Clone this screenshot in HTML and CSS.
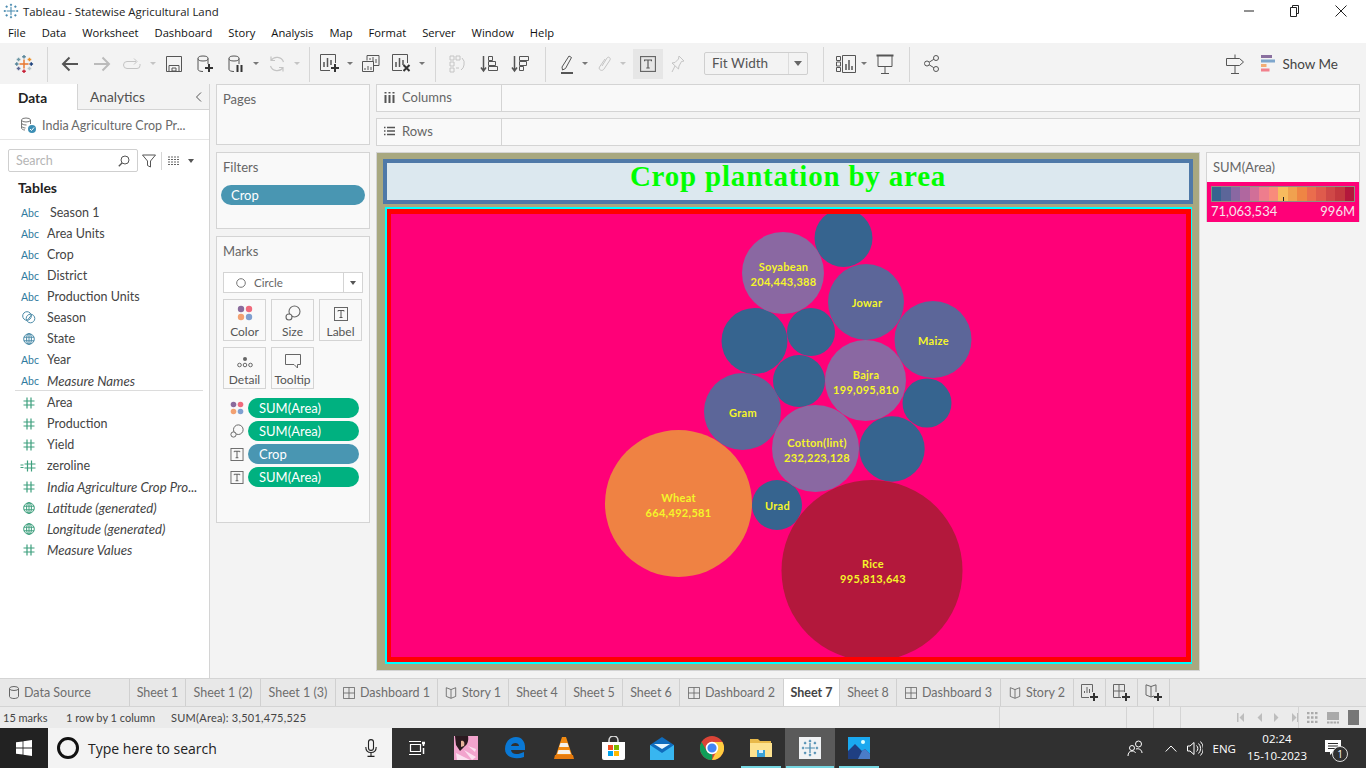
FILE: index.html
```html
<!DOCTYPE html>
<html lang="en">
<head>
    <meta charset="UTF-8">
    <meta name="viewport" content="width=device-width, initial-scale=1.0">
    <title>Tableau - Statewise Agricultural Land</title>
    <link rel="stylesheet" href="styles.css">
</head>
<body>

<svg class="defs" width="0" height="0">
    <symbol id="i-logo" viewBox="0 0 22 22">
        <g fill="none" stroke-width="1.6">
            <path d="M11 6v10M6 11h10" stroke="#e8762d"/>
            <path d="M11 1v4M9 3h4" stroke="#5b879b"/>
            <path d="M11 17v4M9 19h4" stroke="#c72037"/>
            <path d="M1 11h4M3 9v4" stroke="#59879b"/>
            <path d="M17 11h4M19 9v4" stroke="#1f447e"/>
            <path d="M5 4v4M3 6h4" stroke="#7099a6"/>
            <path d="M17 4v4M15 6h4" stroke="#eb912b"/>
            <path d="M5 14v4M3 16h4" stroke="#5c6692"/>
            <path d="M17 14v4M15 16h4" stroke="#b4c3c9"/>
        </g>
    </symbol>
    <symbol id="i-tab-logo" viewBox="0 0 22 22">
        <g fill="none" stroke="#4a8bb0" stroke-width="1.5">
            <path d="M11 5v12M5 11h12"/>
            <path d="M11 1v3M9.5 2.500h3M11 18v3M9.500 19.500h3M1 11h3M2.500 9.500v3M18 11h3M19.500 9.500v3"/>
            <path d="M5 3.500v3M3.500 5h3M17 3.500v3M15.500 5h3M5 15.500v3M3.500 17h3M17 15.500v3M15.500 17h3"/>
        </g>
    </symbol>
    <symbol id="i-hash" viewBox="0 0 12 12">
        <path d="M4 .5v11M8 .5v11M.5 4h11M.5 8h11" fill="none" stroke="currentColor" stroke-width="1.200"/>
    </symbol>
    <symbol id="i-globe" viewBox="0 0 12 12">
        <g fill="none" stroke="currentColor">
            <circle cx="6" cy="6" r="5.300"/>
            <ellipse cx="6" cy="6" rx="2.400" ry="5.300"/>
            <path d="M6 .7v10.600M.9 4.200h10.200M.9 7.800h10.200"/>
        </g>
    </symbol>
    <symbol id="i-dots" viewBox="0 0 16 16">
        <circle cx="4" cy="4" r="3.200" fill="#8a6b9c"/>
        <circle cx="12" cy="4" r="3.200" fill="#ef6a7c"/>
        <circle cx="4" cy="12" r="3.200" fill="#f2a172"/>
        <circle cx="12" cy="12" r="3.200" fill="#7f9fd0"/>
    </symbol>
    <symbol id="i-size" viewBox="0 0 16 16">
        <g fill="none" stroke="#666" stroke-width="1.100">
            <circle cx="9.500" cy="6.500" r="5.500"/>
            <circle cx="4" cy="12" r="3" fill="#f8f8f8"/>
        </g>
    </symbol>
    <symbol id="i-label" viewBox="0 0 14 14">
        <rect x=".5" y=".5" width="13" height="13" fill="none" stroke="#666"/>
        <path d="M4 4.500v-1h6v1M7 3.500v7M5.500 10.500h3" fill="none" stroke="#555"/>
    </symbol>
    <symbol id="i-tab-sheet" viewBox="0 0 14 14">
        <path d="M.5.500h13v13H.5zM7 .5v13M.5 7h13" fill="none" stroke="#666"/>
    </symbol>
    <symbol id="i-tab-story" viewBox="0 0 14 14">
        <path d="M7 3 1.500.8v10.200L7 13.200l5.500-2.200V.8zM7 3v10" fill="none" stroke="#666"/>
    </symbol>
    <symbol id="i-plus" viewBox="0 0 8 8">
        <path d="M4 0v8M0 4h8" stroke="#333" stroke-width="2"/>
    </symbol>
</svg>

<div class="titlebar">
    <svg class="title-logo" width="16" height="16"><use href="#i-tab-logo"/></svg>
    <span class="title-text">Tableau - Statewise Agricultural Land</span>
    <div class="win-btns">
        <span class="win-btn"><svg width="10" height="10" viewBox="0 0 10 10"><path d="M0 5h10" stroke="#222"/></svg></span>
        <span class="win-btn"><svg width="12" height="12" viewBox="0 0 12 12"><path d="M3.500 2.500v-2h6v8h-2M1.500 2.500h6v9h-6z" fill="none" stroke="#222"/></svg></span>
        <span class="win-btn"><svg width="12" height="12" viewBox="0 0 12 12"><path d="M.5.500l11 11M11.500.5l-11 11" stroke="#222"/></svg></span>
    </div>
</div>

<div class="menubar">
    <span>File</span><span>Data</span><span>Worksheet</span><span>Dashboard</span><span>Story</span><span>Analysis</span><span>Map</span><span>Format</span><span>Server</span><span>Window</span><span>Help</span>
</div>

<div class="toolbar">
    <div class="tb-group g1">
        <span class="tool"><svg width="20" height="20"><use href="#i-logo"/></svg></span>
    </div>
    <div class="tb-group g2">
        <span class="tool back"><svg width="18" height="16" viewBox="0 0 18 16"><path d="M17 8H2M8.500 1.500 2 8l6.500 6.500" fill="none" stroke="#555" stroke-width="2"/></svg></span>
        <span class="tool"><svg width="18" height="16" viewBox="0 0 18 16"><path d="M1 8h15M9.500 1.500 16 8l-6.500 6.500" fill="none" stroke="#bbb" stroke-width="2"/></svg></span>
        <span class="tool"><svg width="20" height="12" viewBox="0 0 20 12"><path d="M13 3.500H4a3 3 0 0 0 0 7h10a3 3 0 0 0 3-3V6M11 .5l3 3-3 3" fill="none" stroke="#c4c4c4"/></svg></span>
        <span class="caret off"></span>
        <span class="tool"><svg width="16" height="16" viewBox="0 0 16 16"><path d="M.5.500h15v15H.5zM3 15V9.500h10V15M6 12h4v3H6z" fill="none" stroke="#555"/></svg></span>
        <span class="tool"><svg width="16" height="18" viewBox="0 0 16 18"><path d="M1 3.500v11c0 1 2 2 5 2M11 9V3.500" fill="none" stroke="#555"/><ellipse cx="6" cy="3.500" rx="5" ry="2.500" fill="none" stroke="#555"/><path d="M12 9v8M8 13h8" stroke="#333" stroke-width="2"/></svg></span>
        <span class="tool"><svg width="16" height="18" viewBox="0 0 16 18"><path d="M1 3.500v11c0 1 2 2 5 2M11 9V3.500" fill="none" stroke="#555"/><ellipse cx="6" cy="3.500" rx="5" ry="2.500" fill="none" stroke="#555"/><path d="M9.500 10v7M13.500 10v7" stroke="#333" stroke-width="2"/></svg></span>
        <span class="caret"></span>
        <span class="tool"><svg width="18" height="18" viewBox="0 0 18 18"><path d="M15.500 7A7 7 0 0 0 3 5.500M2.500 11A7 7 0 0 0 15 12.500M3 1.500v4h4M15 16.500v-4h-4" fill="none" stroke="#c4c4c4" stroke-width="1.200"/></svg></span>
        <span class="caret off"></span>
    </div>
    <div class="tb-group g3">
        <span class="tool"><svg width="20" height="19" viewBox="0 0 20 19"><path d="M10 16.500H.5V.5h15V9" fill="none" stroke="#555"/><path d="M4 8v5M7.500 4v9M11 6v5" stroke="#555" stroke-width="1.500"/><path d="M15 10v8M11 14h8" stroke="#333" stroke-width="2"/></svg></span>
        <span class="caret"></span>
        <span class="tool"><svg width="18" height="17" viewBox="0 0 18 17"><path d="M5 5.500V.5h12v10h-5M.5 6.500h11v10H.5z" fill="none" stroke="#555"/><path d="M8 5V3M11 7V2M14 8V4M3 13v2M6 11v4M9 12v3" stroke="#555"/></svg></span>
        <span class="tool"><svg width="20" height="19" viewBox="0 0 20 19"><path d="M10 16.500H.5V.5h15V9" fill="none" stroke="#555"/><path d="M4 8v5M7.500 4v9M11 6v5" stroke="#555" stroke-width="1.500"/><path d="M11.500 11l6 6M17.500 11l-6 6" stroke="#333" stroke-width="2"/></svg></span>
        <span class="caret"></span>
    </div>
    <div class="tb-group g4">
        <span class="tool"><svg width="18" height="18" viewBox="0 0 18 18"><path d="M1 1h4v4H1zM7 1h4v4H7zM1 7h4v4H1zM1 13h4v4H1zM7 13h3M13 3a7 7 0 0 1 2 7M15 10a7 7 0 0 1-3 5" fill="none" stroke="#c4c4c4"/></svg></span>
        <span class="tool"><svg width="18" height="18" viewBox="0 0 18 18"><path d="M3.500 1v15M1 12.500l2.500 3.500L6 12.500" fill="none" stroke="#555" stroke-width="1.500"/><path d="M8.500 1.500h4v4h-4zM8.500 6.500h7v4h-7zM8.500 11.500h9v4h-9z" fill="none" stroke="#555"/></svg></span>
        <span class="tool"><svg width="18" height="18" viewBox="0 0 18 18"><path d="M3.500 1v15M1 12.500l2.500 3.500L6 12.500" fill="none" stroke="#555" stroke-width="1.500"/><path d="M8.500 1.500h9v4h-9zM8.500 6.500h7v4h-7zM8.500 11.500h4v4h-4z" fill="none" stroke="#555"/></svg></span>
    </div>
    <div class="tb-group g5">
        <span class="tool tool-sm"><svg width="14" height="20" viewBox="0 0 14 20"><path d="M2 13 9 2l2.500 1.500-6 11L2.500 16z" fill="none" stroke="#555"/><path d="M1 19h12" stroke="#555" stroke-width="2"/></svg></span>
        <span class="caret"></span>
        <span class="tool tool-sm clip"><svg width="14" height="18" viewBox="0 0 14 18"><path d="M4 11 9 3c1.500-2 4 0 3 2l-6 9c-2 3-6 .5-4.500-2L7 4" fill="none" stroke="#c4c4c4"/></svg></span>
        <span class="caret off"></span>
        <span class="tool tool-t"><svg width="16" height="16"><use href="#i-label"/></svg></span>
        <span class="tool tool-pin"><svg width="14" height="18" viewBox="0 0 14 18"><path d="M8 1l5 5-2.500.5L8 11l-.5 3L1 8l3-.5L7.500 4zM4 11l-3 6" fill="none" stroke="#c4c4c4"/></svg></span>
        <div class="fit-select"><span class="fit-text">Fit Width</span><span class="fit-arrow"><span class="caret-shape"></span></span></div>
    </div>
    <div class="tb-group g6">
        <span class="tool tool-sm"><svg width="20" height="18" viewBox="0 0 20 18"><path d="M.5 1.500h4v4h-4zM.5 7h4v4h-4zM.5 12.500h4v4h-4zM6.500.5h13v17h-13z" fill="none" stroke="#555"/><path d="M10 9v6M13 5v10M16 11v4" stroke="#555" stroke-width="1.500"/></svg></span>
        <span class="caret"></span>
        <span class="tool"><svg width="18" height="20" viewBox="0 0 18 20"><path d="M.5 1.500h17" stroke="#555" stroke-width="2"/><path d="M2 2v10.500h14V2M9 12.500v6.500M5 19.500h8" fill="none" stroke="#555"/></svg></span>
    </div>
    <div class="tb-group g7">
        <span class="tool"><svg width="15" height="17" viewBox="0 0 15 17"><g fill="none" stroke="#555"><circle cx="3" cy="8.500" r="2.500"/><circle cx="12" cy="3" r="2.500"/><circle cx="12" cy="14" r="2.500"/><path d="M5.200 7.200 9.800 4.300M5.200 9.800l4.600 2.900"/></g></svg></span>
    </div>
    <div class="tb-right">
        <span class="tool"><svg width="18" height="20" viewBox="0 0 18 20"><path d="M.5 4.500h13l4 3.500-4 3.500H.5zM9 .5v4M9 11.500V19M5 19.500h8" fill="none" stroke="#555"/></svg></span>
        <svg class="showme-icon" width="15" height="17" viewBox="0 0 15 17">
            <rect width="11" height="3" fill="#8a6f9f"/>
            <rect y="4.500" width="14" height="3" fill="#7ea6cc"/>
            <rect y="9" width="5.500" height="3" fill="#f3ad74"/>
            <rect y="13.500" width="8.500" height="3" fill="#f2808c"/>
        </svg>
        <span class="showme-text">Show Me</span>
    </div>
</div>

<div class="main">
    <div class="data-pane">
        <div class="pane-tabs">
            <span class="pane-tab active">Data</span>
            <span class="pane-tab analytics">Analytics<svg width="7" height="10" viewBox="0 0 7 10"><path d="M6 .5 1.500 5 6 9.500" fill="none" stroke="#555"/></svg></span>
        </div>
        <div class="source-row">
            <svg width="17" height="17" viewBox="0 0 17 17"><g fill="none" stroke="#777"><ellipse cx="6" cy="3" rx="4.500" ry="2"/><path d="M1.500 3v8c0 1 1.500 2 3.500 2M10.500 3v4M1.500 6c0 1.500 3 2 5 2M1.500 9c0 1 2 2 4 2"/></g><circle cx="12" cy="12" r="4" fill="#3d8fb5"/><path d="M10 12l1.500 1.500 2.500-3" fill="none" stroke="#fff"/></svg>
            <span>India Agriculture Crop Pr...</span>
        </div>
        <div class="search-row">
            <div class="search-box"><span>Search</span><svg width="12" height="12" viewBox="0 0 12 12"><circle cx="7" cy="5" r="4" fill="none" stroke="#555"/><path d="M4 8 .8 11.200" stroke="#555" stroke-width="1.300"/></svg></div>
            <svg class="filter-icon" width="14" height="14" viewBox="0 0 14 14"><path d="M.5 1h13L8.500 7v6l-3-1.500V7z" fill="none" stroke="#555"/></svg>
            <span class="search-sep"></span>
            <svg class="list-icon" width="12" height="10" viewBox="0 0 12 10"><path d="M0 1h12M0 3.500h12M0 6h12M0 8.500h12" stroke="#666" stroke-dasharray="2 1"/></svg>
            <span class="caret-shape dark"></span>
        </div>
        <h3 class="tables-head">Tables</h3>
        <ul class="fields">
            <li><span class="abc">Abc</span><span class="shift">Season 1</span></li>
            <li><span class="abc">Abc</span><span>Area Units</span></li>
            <li><span class="abc">Abc</span><span>Crop</span></li>
            <li><span class="abc">Abc</span><span>District</span></li>
            <li><span class="abc">Abc</span><span>Production Units</span></li>
            <li><svg class="ficon blue" width="14" height="13" viewBox="0 0 14 13"><g fill="none" stroke="currentColor"><circle cx="5" cy="5" r="4.300"/><circle cx="8.500" cy="7.500" r="4.300"/><path d="M5.500 9l4-5"/></g></svg><span>Season</span></li>
            <li><svg class="ficon blue" width="12" height="12"><use href="#i-globe"/></svg><span>State</span></li>
            <li><span class="abc">Abc</span><span>Year</span></li>
            <li><span class="abc">Abc</span><span class="calc">Measure Names</span></li>
            <li class="rule"></li>
            <li><svg class="ficon green" width="12" height="12"><use href="#i-hash"/></svg><span>Area</span></li>
            <li><svg class="ficon green" width="12" height="12"><use href="#i-hash"/></svg><span>Production</span></li>
            <li><svg class="ficon green" width="12" height="12"><use href="#i-hash"/></svg><span>Yield</span></li>
            <li><svg class="ficon green wide" width="16" height="12" viewBox="0 0 16 12"><path d="M.5 5h3M.5 7.500h3" stroke="currentColor"/><path d="M7.500.5v11M11.500.5v11M4.500 4h11M4.500 8h11" fill="none" stroke="currentColor" stroke-width="1.200"/></svg><span>zeroline</span></li>
            <li><svg class="ficon green" width="12" height="12"><use href="#i-hash"/></svg><span class="calc">India Agriculture Crop Pro...</span></li>
            <li><svg class="ficon green" width="12" height="12"><use href="#i-globe"/></svg><span class="calc">Latitude (generated)</span></li>
            <li><svg class="ficon green" width="12" height="12"><use href="#i-globe"/></svg><span class="calc">Longitude (generated)</span></li>
            <li><svg class="ficon green" width="12" height="12"><use href="#i-hash"/></svg><span class="calc">Measure Values</span></li>
        </ul>
    </div>

    <div class="side">
        <div class="card pages"><div class="card-title">Pages</div></div>
        <div class="card filters">
            <div class="card-title">Filters</div>
            <div class="pill blue-pill filter-pill">Crop</div>
        </div>
        <div class="card marks">
            <div class="card-title">Marks</div>
            <div class="mark-select">
                <span class="mark-type"><svg width="10" height="10" viewBox="0 0 10 10"><circle cx="5" cy="5" r="4.300" fill="none" stroke="#777"/></svg>Circle</span>
                <span class="mark-arrow"><span class="caret-shape"></span></span>
            </div>
            <div class="mark-btns">
                <div class="mark-btn"><svg width="16" height="16"><use href="#i-dots"/></svg><span>Color</span></div>
                <div class="mark-btn"><svg width="16" height="16"><use href="#i-size"/></svg><span>Size</span></div>
                <div class="mark-btn"><svg width="14" height="14"><use href="#i-label"/></svg><span>Label</span></div>
                <div class="mark-btn"><svg width="16" height="14" viewBox="0 0 16 14"><circle cx="8" cy="4" r="2" fill="#666"/><g fill="none" stroke="#666"><circle cx="2.500" cy="10" r="1.800"/><circle cx="8" cy="10" r="1.800"/><circle cx="13.500" cy="10" r="1.800"/></g></svg><span>Detail</span></div>
                <div class="mark-btn"><svg width="16" height="15" viewBox="0 0 16 15"><path d="M.5.500h15v10h-3v3.500l-3.500-3.500H.5z" fill="none" stroke="#666"/></svg><span>Tooltip</span></div>
            </div>
            <div class="encodings">
                <div class="enc"><svg width="14" height="14"><use href="#i-dots"/></svg><div class="pill green-pill">SUM(Area)</div></div>
                <div class="enc"><svg width="14" height="14"><use href="#i-size"/></svg><div class="pill green-pill">SUM(Area)</div></div>
                <div class="enc"><svg width="13" height="13"><use href="#i-label"/></svg><div class="pill blue-pill">Crop</div></div>
                <div class="enc"><svg width="13" height="13"><use href="#i-label"/></svg><div class="pill green-pill">SUM(Area)</div></div>
            </div>
        </div>
    </div>

    <div class="work">
        <div class="shelf">
            <div class="shelf-label"><svg width="11" height="11" viewBox="0 0 11 11"><path d="M1.500 3v8M5.500 3v8M9.500 3v8M1.500 0v1.500M5.500 0v1.500M9.500 0v1.500" stroke="#555" stroke-width="2"/></svg>Columns</div>
        </div>
        <div class="shelf">
            <div class="shelf-label"><svg width="11" height="10" viewBox="0 0 11 10"><path d="M3 1.500h8M3 5h8M3 8.500h8M0 1.500h1.500M0 5h1.500M0 8.500h1.500" stroke="#555" stroke-width="1.500"/></svg>Rows</div>
        </div>
        <div class="view-row">
            <div class="dash">
                <div class="dash-title">Crop plantation by area</div>
                <div class="viz-frame">
                    <svg class="bubbles" width="795" height="443" viewBox="391 214 795 443">
                        <g class="b-low">
                            <circle cx="843.500" cy="238" r="29"/>
                            <circle cx="754.500" cy="341" r="33"/>
                            <circle cx="811" cy="332" r="24"/>
                            <circle cx="799" cy="381" r="26"/>
                            <circle cx="927" cy="403" r="24.500"/>
                            <circle cx="892" cy="449" r="32.700"/>
                            <circle cx="777" cy="505" r="25"/>
                        </g>
                        <g class="b-mid">
                            <circle cx="866" cy="302" r="38"/>
                            <circle cx="933" cy="339.500" r="38.500"/>
                            <circle cx="742.500" cy="411.500" r="38.500"/>
                        </g>
                        <g class="b-high">
                            <circle cx="783" cy="273" r="41"/>
                            <circle cx="865.500" cy="380.500" r="40.500"/>
                            <circle cx="815.500" cy="448.500" r="43.500"/>
                        </g>
                        <circle class="b-wheat" cx="678.500" cy="503.500" r="73.500"/>
                        <circle class="b-rice" cx="872" cy="570.500" r="90.500"/>
                        <g class="b-text">
                            <text x="783.500" y="271">Soyabean</text>
                            <text x="783.500" y="286">204,443,388</text>
                            <text x="867" y="307">Jowar</text>
                            <text x="933.500" y="345">Maize</text>
                            <text x="866" y="379">Bajra</text>
                            <text x="866" y="394">199,095,810</text>
                            <text x="743" y="417">Gram</text>
                            <text x="817" y="447">Cotton(lint)</text>
                            <text x="817" y="462">232,223,128</text>
                            <text x="678.500" y="502">Wheat</text>
                            <text x="678.500" y="517">664,492,581</text>
                            <text x="777.500" y="510">Urad</text>
                            <text x="873" y="568">Rice</text>
                            <text x="873" y="583">995,813,643</text>
                        </g>
                    </svg>
                </div>
            </div>
            <div class="legend">
                <div class="legend-title">SUM(Area)</div>
                <div class="legend-body">
                    <div class="ramp">
                        <i class="c1"></i><i class="c2"></i><i class="c3"></i><i class="c4"></i><i class="c5"></i><i class="c6"></i><i class="c7"></i><i class="c8"></i><i class="c9"></i><i class="c10"></i><i class="c11"></i><i class="c12"></i><i class="c13"></i><i class="c14"></i><i class="c15"></i>
                        <span class="tick"></span>
                    </div>
                    <div class="ramp-labels"><span>71,063,534</span><span>996M</span></div>
                </div>
            </div>
        </div>
    </div>
</div>

<div class="tabs">
    <span class="tab t-source"><svg width="10" height="13" viewBox="0 0 10 13"><path d="M.5 2.500v8c0 1 2 2 4.500 2s4.500-1 4.500-2v-8" fill="none" stroke="#666"/><ellipse cx="5" cy="2.500" rx="4.500" ry="2" fill="none" stroke="#666"/></svg>Data Source</span>
    <span class="tab t-sheet">Sheet 1</span>
    <span class="tab t-sheet2">Sheet 1 (2)</span>
    <span class="tab t-sheet2">Sheet 1 (3)</span>
    <span class="tab t-dash"><svg width="12" height="12"><use href="#i-tab-sheet"/></svg>Dashboard 1</span>
    <span class="tab t-story"><svg width="12" height="12"><use href="#i-tab-story"/></svg>Story 1</span>
    <span class="tab t-sheet3">Sheet 4</span>
    <span class="tab t-sheet3">Sheet 5</span>
    <span class="tab t-sheet3">Sheet 6</span>
    <span class="tab t-dash2"><svg width="12" height="12"><use href="#i-tab-sheet"/></svg>Dashboard 2</span>
    <span class="tab t-active">Sheet 7</span>
    <span class="tab t-sheet3">Sheet 8</span>
    <span class="tab t-dash2"><svg width="12" height="12"><use href="#i-tab-sheet"/></svg>Dashboard 3</span>
    <span class="tab t-story2"><svg width="12" height="12"><use href="#i-tab-story"/></svg>Story 2</span>
    <span class="tab t-new"><svg width="18" height="18" viewBox="0 0 18 18"><path d="M8 13.500H.5V.5h11V8M3.500 9V7M6 9V3M8.500 9V5" fill="none" stroke="#666"/><use href="#i-plus" x="9" y="9" width="8" height="8"/></svg></span>
    <span class="tab t-new"><svg width="18" height="18" viewBox="0 0 18 18"><path d="M8 13.500H.5V.5h11V8M6 .5v13M.5 7h11" fill="none" stroke="#666"/><use href="#i-plus" x="9" y="9" width="8" height="8"/></svg></span>
    <span class="tab t-new"><svg width="18" height="18" viewBox="0 0 18 18"><path d="M6 2.500 1 .8v10.200l5 2 3-1M6 2.500 11 .8V8M6 2.500V13" fill="none" stroke="#666"/><use href="#i-plus" x="9" y="9" width="8" height="8"/></svg></span>
</div>

<div class="status">
    <span class="st-marks">15 marks</span>
    <span class="st-rows">1 row by 1 column</span>
    <span class="st-sum">SUM(Area): 3,501,475,525</span>
    <span class="st-cell st-a"></span>
    <span class="st-cell st-b"></span>
    <span class="st-cell st-c"></span>
    <span class="st-cell st-d">
        <svg width="62" height="9" viewBox="0 0 62 9"><g fill="#bdbdbd"><path d="M0 0h1.500v9H0zM7 0v9L2.500 4.500zM25 0v9l-4.500-4.500zM37 0v9l4.500-4.500zM55 0v9l4.500-4.500zM60 0h1.500v9H60z"/></g></svg>
    </span>
    <span class="st-view">
        <svg width="11" height="11" viewBox="0 0 11 11"><path d="M0 1h11M0 5.500h11M0 10h11" stroke="#aaa" stroke-width="2.500" stroke-dasharray="2.500 1.500"/></svg>
        <svg width="12" height="12" viewBox="0 0 12 12"><rect width="12" height="8" fill="#aaa"/><path d="M0 10.500h12" stroke="#aaa" stroke-width="2" stroke-dasharray="2.500 .8"/></svg>
        <svg width="11" height="15" viewBox="0 0 11 15"><rect width="11" height="15" fill="#777"/></svg>
    </span>
</div>

<div class="taskbar">
    <span class="start"><svg width="16" height="16" viewBox="0 0 16 16"><path d="M0 2.300 6.600 1.400v6.100H0zM7.400 1.300 16 0v7.500H7.400zM0 8.500h6.600v6.100L0 13.700zM7.400 8.500H16V16l-8.600-1.300z" fill="#fff"/></svg></span>
    <div class="task-search">
        <span class="cortana"></span>
        <span class="task-search-text">Type here to search</span>
        <svg class="mic" width="12" height="18" viewBox="0 0 12 18"><g fill="none" stroke="#222" stroke-width="1.100"><rect x="3.500" y=".6" width="5" height="10.800" rx="2.500"/><path d="M.8 8c0 3.500 2 5.500 5.200 5.500s5.200-2 5.200-5.500M6 13.500V17M2.500 17.400h7"/></g></svg>
    </div>
    <span class="task-app a-view"><svg width="16" height="16" viewBox="0 0 16 16"><g fill="none" stroke="#fff" stroke-width="1.200"><path d="M1.500 4.500h10v7h-10z"/><path d="M0 1.500h12M0 14.500h12"/><path d="M14.500 3v3M14.500 8v6" stroke-width="1.500"/><path d="M13 3h3" stroke-width="2.500"/></g></svg></span>
    <span class="task-app"><svg width="24" height="24" viewBox="0 0 24 24"><rect width="24" height="24" fill="#f2a4cd"/><path d="M1 0h13c1 5-1 9-3 10L6 15 2 9z" fill="#2b1a20"/><path d="M7 5c3-1 4 2 3 5L7 11z" fill="#e7b49c"/><path d="M2 17l14 7H3zM10 14l12 7-4 3zM14 10l8 3-1 3z" fill="#fbe0ef"/></svg></span>
    <span class="task-app"><svg width="20" height="22" viewBox="0 0 20 22"><path d="M0 12C0 5 5 0 11 0c6 0 9 5 9 10v3H6c.5 5 7 5 13 2v5c-8 3-19 1-19-8zM6 9h8c0-4-7-4-8 0z" fill="#0a78d4"/></svg></span>
    <span class="task-app"><svg width="20" height="24" viewBox="0 0 20 24"><path d="M8 1h4l6 18H2z" fill="#f28a11"/><path d="M6.500 7h7l1.300 4H5.200zM4.500 14h11l1.300 4H3.200z" fill="#f5f1ea"/><path d="M1 19h18l1 4H0z" fill="#e67a0c"/></svg></span>
    <span class="task-app"><svg width="23" height="24" viewBox="0 0 23 24"><path d="M7 7V4.500a4.500 4.500 0 0 1 9 0V7" fill="none" stroke="#ddd" stroke-width="1.500"/><path d="M0 6h23v16a2 2 0 0 1-2 2H2a2 2 0 0 1-2-2z" fill="#fff"/><rect x="6" y="9" width="5" height="5" fill="#f25022"/><rect x="12" y="9" width="5" height="5" fill="#7fba00"/><rect x="6" y="15" width="5" height="5" fill="#00a4ef"/><rect x="12" y="15" width="5" height="5" fill="#ffb900"/></svg></span>
    <span class="task-app"><svg width="24" height="23" viewBox="0 0 24 23"><path d="M12 0 24 8v15H0V8z" fill="#0f6cbd"/><path d="M0 8l12 8 12-8v15H0z" fill="#38b6f0"/><path d="M4 7h16l-8 5z" fill="#e7f7ff"/></svg></span>
    <span class="task-app"><svg width="24" height="24" viewBox="0 0 24 24"><circle cx="12" cy="12" r="12" fill="#db4437"/><path d="M12 24A12 12 0 0 1 1.600 6L7 15.500l5.500 3z" fill="#0f9d58"/><path d="M12 24a12 12 0 0 0 10.400-18H12l4.500 9z" fill="#ffcd40"/><circle cx="12" cy="12" r="5.400" fill="#4285f4" stroke="#fff" stroke-width="1.600"/></svg></span>
    <span class="task-app"><svg width="22" height="18" viewBox="0 0 22 18"><path d="M0 0h8l2 2h11v16H0z" fill="#e8b94a"/><path d="M0 4h22v14H0z" fill="#fde28f"/><path d="M7 11h8v7H7z" fill="#3aa2d8"/><rect x="9" y="11" width="4" height="3" fill="#d8f1ff"/></svg></span>
    <span class="task-app a-tableau"><svg width="22" height="22" viewBox="0 0 22 22"><rect width="22" height="22" fill="#f0f2f4"/><use href="#i-tab-logo" x="2" y="2" width="18" height="18"/></svg></span>
    <span class="task-app"><svg width="22" height="22" viewBox="0 0 22 22"><rect width="22" height="22" fill="#1aa8ef"/><path d="M0 22v-8l7-7 7 7 3-2 5 5v5z" fill="#1f3f82"/><path d="M14 14l3-2 5 5v5H10z" fill="#4a7cc7"/><circle cx="15" cy="5" r="2" fill="#dff"/></svg></span>
    <span class="underline u-files"></span>
    <span class="underline u-tableau"></span>
    <span class="underline u-photos"></span>
    <div class="tray">
        <svg class="t-people" width="17" height="17" viewBox="0 0 17 17"><g fill="none" stroke="#fff"><circle cx="11.500" cy="4" r="3"/><circle cx="5" cy="8" r="2.500"/><path d="M1 16c0-3 1.500-5 4-5s3 1 3.500 2M9 9c3-1 6 1 6 4"/></g></svg>
        <svg class="t-chev" width="12" height="7" viewBox="0 0 12 7"><path d="M.7 6.500 6 1l5.300 5.500" fill="none" stroke="#fff"/></svg>
        <svg class="t-vol" width="16" height="15" viewBox="0 0 16 15"><path d="M.5 5h2.500L7 1.500v12L3 10H.5zM9.500 4.500a4 4 0 0 1 0 6M11.500 2.500a7 7 0 0 1 0 10M13.500 .5a10 10 0 0 1 0 14" fill="none" stroke="#fff"/></svg>
        <span class="t-lang">ENG</span>
        <span class="t-clock"><span>02:24</span><span>15-10-2023</span></span>
        <span class="t-note">
            <svg width="16" height="16" viewBox="0 0 16 16"><path d="M0 0h16v12H8l-3 3v-3H0z" fill="#fff"/><path d="M3 3.500h10M3 6h10M3 8.500h7" stroke="#2b2b2b"/></svg>
            <span class="t-badge">1</span>
        </span>
    </div>
</div>

</body>
</html>
```

FILE: styles.css
```css
/* General */
html, body {
    margin: 0;
    padding: 0;
}

body {
    width: 1366px;
    height: 768px;
    overflow: hidden;
    display: flex;
    flex-direction: column;
    background: #f3f3f3;
    font-family: 'Lato', sans-serif;
    font-size: 12.5px;
    color: #4f4f4f;
}

svg {
    display: block;
    flex-shrink: 0;
}

.defs {
    position: absolute;
}

/* Window title and menu */
.titlebar {
    height: 22px;
    background: #fff;
    display: flex;
    align-items: center;
    padding-left: 3px;
}

.title-logo {
    margin-right: 4px;
}

.title-text {
    font-family: 'Open Sans', sans-serif;
    font-size: 11.4px;
    color: #222;
}

.win-btns {
    margin-left: auto;
    display: flex;
    padding-right: 2px;
}

.win-btn {
    width: 46px;
    height: 22px;
    display: flex;
    align-items: center;
    justify-content: center;
}

.menubar {
    height: 21px;
    background: #fff;
    display: flex;
    align-items: center;
    font-family: 'Open Sans', sans-serif;
    font-size: 11.2px;
    color: #111;
}

.menubar span {
    padding: 0 8px;
}

/* Toolbar */
.toolbar {
    height: 41px;
    background: #f3f3f3;
    display: flex;
    align-items: flex-start;
    padding-top: 4px;
    box-sizing: border-box;
}

.tb-group {
    height: 35px;
    display: flex;
    align-items: center;
    border-right: 1px solid #d6d6d6;
    padding-bottom: 2px;
    box-sizing: border-box;
}

.g1 { width: 48px; padding-left: 8px; }
.g2 { width: 262px; padding-left: 6px; }
.g3 { width: 126px; padding-left: 4px; }
.g4 { width: 110px; padding-left: 6px; }
.g5 { width: 278px; padding-left: 7px; }
.g6 { width: 86px; padding-left: 8px; }
.g7 { width: 50px; padding-left: 6px; border-right: none; }

.tool {
    width: 31px;
    height: 30px;
    display: flex;
    align-items: center;
    justify-content: center;
}

.back {
    margin-right: 1px;
}

.tool-sm {
    width: 27px;
}

.clip {
    margin-left: 1px;
}

.tool-t {
    width: 30px;
    margin-left: 5px;
    background: #e6e6e6;
}

.tool-pin {
    width: 29px;
}

.caret {
    width: 10px;
    height: 30px;
    display: flex;
    align-items: center;
    justify-content: center;
}

.caret::after,
.caret-shape {
    content: "";
    display: block;
    width: 0;
    height: 0;
    border-left: 3px solid transparent;
    border-right: 3px solid transparent;
    border-top: 3px solid #777;
}

.caret.off::after {
    border-top-color: #c4c4c4;
}

.fit-select {
    width: 104px;
    height: 23px;
    margin-left: 12px;
    display: flex;
    border: 1px solid #cfcfcf;
    border-radius: 2px;
    box-sizing: border-box;
    font-size: 13.5px;
    color: #555;
}

.fit-text {
    flex: 1;
    padding-left: 7px;
    line-height: 21px;
}

.fit-arrow {
    width: 18px;
    border-left: 1px solid #dcdcdc;
    display: flex;
    align-items: center;
    justify-content: center;
}

.fit-arrow .caret-shape {
    border-left-width: 4px;
    border-right-width: 4px;
    border-top-width: 5px;
    border-top-color: #666;
}

.tb-right {
    margin-left: auto;
    height: 35px;
    display: flex;
    align-items: center;
    padding-right: 28px;
    padding-bottom: 2px;
    box-sizing: border-box;
}

.showme-icon {
    margin: 0 6px 0 11px;
}

.showme-text {
    font-size: 13.5px;
    color: #444;
}

/* Main area */
.main {
    height: 594px;
    display: flex;
    background: #f3f3f3;
}

.data-pane {
    width: 210px;
    background: #fff;
    border-right: 1px solid #d4d4d4;
    box-sizing: border-box;
    flex-shrink: 0;
}

.pane-tabs {
    height: 26px;
    display: flex;
}

.pane-tab {
    line-height: 27px;
    font-size: 13.7px;
}

.pane-tab.active {
    width: 77px;
    padding-left: 18px;
    box-sizing: border-box;
    font-weight: 700;
    color: #222;
}

.pane-tab.analytics {
    flex: 1;
    padding-left: 12px;
    display: flex;
    align-items: center;
    justify-content: space-between;
    padding-right: 7px;
    background: #f3f3f3;
    border-left: 1px solid #d4d4d4;
    border-bottom: 1px solid #d4d4d4;
    box-sizing: border-box;
}

.source-row {
    height: 30px;
    display: flex;
    align-items: center;
    gap: 5px;
    padding: 1px 0 0 20px;
    border-bottom: 1px solid #e6e6e6;
    box-sizing: border-box;
    color: #6a6a6a;
}

.search-row {
    display: flex;
    align-items: center;
    padding: 9px 0 0 8px;
}

.search-box {
    width: 130px;
    height: 23px;
    border: 1px solid #cfcfcf;
    border-radius: 2px;
    box-sizing: border-box;
    display: flex;
    align-items: center;
    justify-content: space-between;
    padding: 0 7px;
    color: #b5b5b5;
}

.filter-icon {
    margin-left: 4px;
}

.search-sep {
    width: 1px;
    height: 18px;
    background: #d6d6d6;
    margin: 0 6px 0 5px;
}

.caret-shape.dark {
    margin-left: 8px;
    border-left-width: 3.5px;
    border-right-width: 3.5px;
    border-top-width: 4px;
    border-top-color: #555;
}

.tables-head {
    margin: 7px 0 0 18px;
    font-size: 14px;
    line-height: 18px;
    color: #222;
    font-weight: 700;
}

.fields {
    list-style: none;
    margin: 5px 0 0 0;
    padding: 0;
}

.fields li {
    height: 21px;
    display: flex;
    align-items: center;
    color: #444;
}

.fields li.rule {
    height: 1px;
    margin: -1px 6px 1px 15px;
    background: #dcdcdc;
}

.abc {
    width: 47px;
    padding-left: 21px;
    box-sizing: border-box;
    font-size: 10.5px;
    color: #2f7a9e;
}

.shift {
    margin-left: 3px;
}

.calc {
    font-size: 13.2px;
    font-style: italic;
    white-space: nowrap;
}

.ficon {
    margin-left: 23px;
    margin-right: 12px;
}

.ficon.blue { color: #4b8ba8; margin-left: 22px; margin-right: 11px; }
.ficon.blue[width="12"] { margin-left: 23px; margin-right: 12px; }
.ficon.green { color: #3d9f7d; }
.ficon.wide { margin-left: 20px; margin-right: 11px; }

/* Pages, Filters, Marks */
.side {
    width: 154px;
    margin-left: 6px;
    flex-shrink: 0;
    display: flex;
    flex-direction: column;
    gap: 7px;
}

.card {
    background: #f9f9f9;
    border: 1px solid #d4d4d4;
    box-sizing: border-box;
}

.card-title {
    font-size: 13px;
    color: #666;
    padding: 6px 0 0 6px;
    line-height: 16px;
}

.pages { height: 61px; }
.filters { height: 77px; }
.marks { height: 287px; }

.pill {
    height: 20px;
    border-radius: 10px;
    line-height: 20px;
    font-size: 13px;
    color: #fff;
    padding-left: 10px;
    box-sizing: border-box;
}

.blue-pill { background: #4996b2; }
.green-pill { background: #00b180; }

.filter-pill {
    margin: 10px 4px 0 4px;
}

.mark-select {
    height: 21px;
    margin: 13px 6px 0 6px;
    border: 1px solid #d4d4d4;
    background: #fff;
    display: flex;
    box-sizing: border-box;
    font-size: 11.6px;
    color: #666;
}

.mark-type {
    flex: 1;
    display: flex;
    align-items: center;
    gap: 8px;
    padding-left: 12px;
}

.mark-arrow {
    width: 18px;
    border-left: 1px solid #d4d4d4;
    display: flex;
    align-items: center;
    justify-content: center;
}

.mark-arrow .caret-shape {
    border-left-width: 3.5px;
    border-right-width: 3.5px;
    border-top-width: 4px;
    border-top-color: #555;
}

.mark-btns {
    display: grid;
    grid-template-columns: 43px 43px 43px;
    column-gap: 5px;
    row-gap: 6px;
    margin: 6px 0 0 6px;
}

.mark-btn {
    height: 42px;
    border: 1px solid #d4d4d4;
    box-sizing: border-box;
    display: flex;
    flex-direction: column;
    align-items: center;
    justify-content: flex-end;
    gap: 3px;
    padding-bottom: 1px;
    font-size: 12px;
    color: #555;
}

.encodings {
    margin: 9px 0 0 13px;
    display: flex;
    flex-direction: column;
    gap: 3px;
}

.enc {
    display: flex;
    align-items: center;
    height: 20px;
}

.enc svg {
    width: 14px;
}

.enc .pill {
    width: 111px;
    margin-left: 4px;
    padding-left: 11px;
}

/* Shelves and the view */
.work {
    flex: 1;
    margin: 0 6px 0 6px;
    display: flex;
    flex-direction: column;
    gap: 6px;
}

.shelf {
    height: 28px;
    background: #f9f9f9;
    border: 1px solid #d4d4d4;
    box-sizing: border-box;
}

.shelf-label {
    width: 125px;
    height: 26px;
    border-right: 1px solid #d4d4d4;
    display: flex;
    align-items: center;
    gap: 7px;
    padding: 0 0 2px 7px;
    box-sizing: border-box;
    font-size: 13px;
    color: #666;
}

.view-row {
    display: flex;
    gap: 6px;
    align-items: flex-start;
}

.dash {
    width: 824px;
    height: 519px;
    background: #a8a880;
    border: 1px solid #d4d4d4;
    box-sizing: border-box;
    padding: 6px 0 0 6px;
}

.dash-title {
    width: 810px;
    height: 45px;
    border: 4px solid #4f79a8;
    background: #dce8ef;
    box-sizing: border-box;
    font-family: 'Liberation Serif', serif;
    font-weight: 700;
    font-size: 29px;
    letter-spacing: 0.8px;
    line-height: 26px;
    color: #00ff00;
    text-align: center;
}

.viz-frame {
    width: 807px;
    height: 457px;
    margin: 3px 0 0 2px;
    border-style: solid;
    border-color: #00ffff;
    border-width: 2px 1px 2px 2px;
    box-sizing: border-box;
}

.bubbles {
    box-sizing: content-box;
    background: #ff0078;
    border-style: solid;
    border-color: #ff0000;
    border-width: 5px 5px 5px 4px;
}

.b-low circle { fill: #36648f; }
.b-mid circle { fill: #5c6699; }
.b-high circle { fill: #8a68a2; }
.b-wheat { fill: #ef8243; }
.b-rice { fill: #b3183c; }

.b-text text {
    font-family: 'Lato', sans-serif;
    font-size: 11px;
    font-weight: 700;
    letter-spacing: 0.3px;
    fill: #f5f52a;
    text-anchor: middle;
}

.legend {
    width: 154px;
    height: 70px;
    background: #f9f9f9;
    border: 1px solid #d4d4d4;
    box-sizing: border-box;
}

.legend-title {
    height: 29px;
    line-height: 28px;
    padding-left: 6px;
    font-size: 13px;
    color: #666;
}

.legend-body {
    height: 40px;
    background: #ff0078;
    padding: 4px 4px 0 4px;
    box-sizing: border-box;
    font-size: 13px;
}

.ramp {
    position: relative;
    height: 16px;
    display: flex;
    border: 1px solid #8f8f80;
    box-sizing: border-box;
}

.ramp i { flex: 1; }
.c1 { background: #36648f; }
.c2 { background: #5c6699; }
.c3 { background: #8a68a2; }
.c4 { background: #b0679f; }
.c5 { background: #d16f98; }
.c6 { background: #ee7d8d; }
.c7 { background: #f98b7b; }
.c8 { background: #f7bb5e; }
.c9 { background: #f0a14f; }
.c10 { background: #ef8544; }
.c11 { background: #ea6d4d; }
.c12 { background: #df5b4c; }
.c13 { background: #cf4847; }
.c14 { background: #c3383f; }
.c15 { background: #b3183c; }

.tick {
    position: absolute;
    left: 71px;
    bottom: 0;
    width: 1px;
    height: 4px;
    background: #222;
}

.ramp-labels {
    display: flex;
    justify-content: space-between;
    color: #f7e4ec;
    line-height: 19px;
}

/* Sheet tabs */
.tabs {
    height: 29px;
    display: flex;
    background: #e8e8e8;
    border-top: 1px solid #d4d4d4;
    border-bottom: 1px solid #d4d4d4;
    box-sizing: border-box;
    font-size: 12.5px;
    color: #6e6e6e;
}

.tab {
    display: flex;
    align-items: center;
    justify-content: center;
    gap: 5px;
    border-right: 1px solid #d0d0d0;
    box-sizing: border-box;
    white-space: nowrap;
}

.t-source { width: 130px; justify-content: flex-start; padding-left: 9px; }
.t-sheet { width: 56px; }
.t-sheet2 { width: 75px; }
.t-dash { width: 102px; }
.t-story { width: 71px; }
.t-sheet3 { width: 57px; }
.t-dash2 { width: 104px; }
.t-active { width: 56px; background: #fff; font-weight: 700; color: #444; }
.t-story2 { width: 73px; }
.t-new { width: 32px; }

/* Status bar */
.status {
    height: 21px;
    background: #ebebeb;
    display: flex;
    align-items: center;
    font-size: 11px;
    color: #444;
    position: relative;
}

.st-marks { width: 66px; padding-left: 3px; box-sizing: border-box; }
.st-rows { width: 105px; }
.st-sum { width: 828px; letter-spacing: 0.25px; }

.st-cell {
    height: 21px;
    border-left: 1px solid #d4d4d4;
    box-sizing: border-box;
    display: flex;
    align-items: center;
}

.st-a { width: 127px; }
.st-b { width: 27px; }
.st-c { width: 27px; }
.st-d { width: 118px; padding-left: 56px; }

.st-view {
    height: 21px;
    flex: 1;
    display: flex;
    align-items: center;
    gap: 9px;
    padding-left: 8px;
    border-left: 1px solid #d4d4d4;
    box-sizing: border-box;
}

/* Windows taskbar */
.taskbar {
    height: 40px;
    background: #303030;
    display: flex;
    align-items: center;
    position: relative;
    color: #fff;
}

.start {
    width: 48px;
    height: 40px;
    display: flex;
    align-items: center;
    justify-content: center;
    background: #222;
}

.task-search {
    width: 344px;
    height: 40px;
    background: #f3f3f3;
    display: flex;
    align-items: center;
    color: #222;
}

.cortana {
    width: 22px;
    height: 22px;
    margin-left: 9px;
    border: 3px solid #111;
    border-radius: 50%;
    box-sizing: border-box;
}

.task-search-text {
    font-family: 'Open Sans', sans-serif;
    font-size: 14px;
    margin-left: 9px;
}

.mic {
    margin-left: auto;
    margin-right: 15px;
}

.task-app {
    width: 49.2px;
    height: 40px;
    display: flex;
    align-items: center;
    justify-content: center;
}

.a-view {
    width: 49px;
}

.a-tableau {
    background: #5a5a5a;
}

.underline {
    position: absolute;
    bottom: 0;
    height: 2px;
    background: #76d7e2;
}

.u-files { left: 741px; width: 40px; }
.u-tableau { left: 786px; width: 48px; }
.u-photos { left: 839px; width: 40px; }

.tray {
    margin-left: auto;
    display: flex;
    align-items: center;
    height: 40px;
    font-family: 'Open Sans', sans-serif;
    font-size: 11.5px;
}

.t-people { margin-right: 21px; }
.t-chev { margin-right: 10px; }
.t-vol { margin-right: 10px; }
.t-lang { margin-right: 11px; }

.t-clock {
    display: flex;
    flex-direction: column;
    align-items: center;
    line-height: 17px;
    padding-bottom: 3px;
    margin-right: 18px;
}

.t-note {
    position: relative;
    width: 41px;
    height: 40px;
    display: flex;
    align-items: center;
}

.t-badge {
    position: absolute;
    left: 7px;
    top: 18px;
    width: 16px;
    height: 16px;
    border: 1px solid #ddd;
    border-radius: 50%;
    background: #303030;
    box-sizing: border-box;
    font-size: 10px;
    line-height: 14px;
    text-align: center;
}
```
